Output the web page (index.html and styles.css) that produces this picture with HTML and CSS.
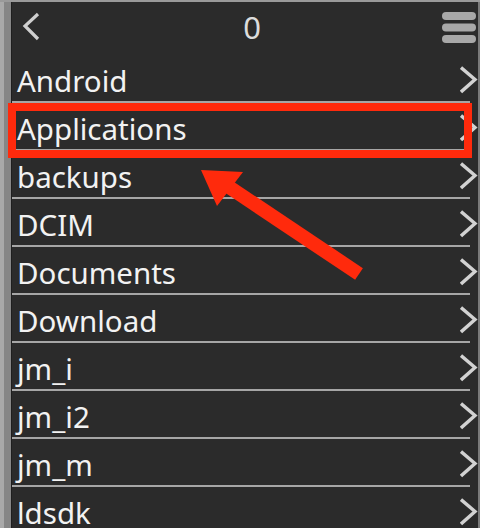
FILE: index.html
```html
<!DOCTYPE html>
<html>
    <head>
        <link rel="stylesheet" href="styles.css">
    </head>
    <body>
        <div class="screen">
            <div class="edge"></div>
            <div class="panel">
                <div class="header">
                    <svg class="back" width="20" height="32" viewBox="0 0 20 32">
                        <polyline points="16,3 3,15 16,28" fill="none" stroke="#cfcfcf" stroke-width="3.2"/>
                    </svg>
                    <span class="count">0</span>
                    <svg class="menu" width="34" height="32" viewBox="0 0 34 32">
                        <rect x="0" y="0" width="34" height="8" rx="4" fill="#a8a8a8"/>
                        <rect x="0" y="11.5" width="34" height="8" rx="4" fill="#a8a8a8"/>
                        <rect x="0" y="23" width="34" height="8" rx="4" fill="#a8a8a8"/>
                    </svg>
                </div>
                <ul class="list">
                    <li>Android</li>
                    <li>Applications</li>
                    <li>backups</li>
                    <li>DCIM</li>
                    <li>Documents</li>
                    <li>Download</li>
                    <li>jm_i</li>
                    <li>jm_i2</li>
                    <li>jm_m</li>
                    <li>ldsdk</li>
                </ul>
            </div>
        </div>

        <!-- segni rossi sopra lo screenshot -->
        <div class="mark"></div>
        <svg class="arrow" width="480" height="528" viewBox="0 0 480 528">
            <line x1="359" y1="274" x2="226" y2="185" stroke="#ff2a0c" stroke-width="14"/>
            <polygon points="201,170 243,172 217,206" fill="#ff2a0c"/>
        </svg>
    </body>
</html>
```

FILE: styles.css
```css
body {
    margin: 0;
    width: 480px;
    height: 528px;
    overflow: hidden;
    background-color: #2b2b2b;
    font-family: "Noto Sans", "Open Sans", sans-serif;
}
.screen {
    display: flex;
    height: 528px;
    border-top: 2px solid #9a9a9a;
    box-sizing: border-box;
}
.edge {
    width: 12px;
    flex-shrink: 0;
    background: linear-gradient(to right, #a9a9a9 0, #a9a9a9 4px, #868686 4px, #868686 11px, #1e1e1e 11px);
}
.panel {
    flex: 1;
    border-right: 2px solid #7a7a7a;
}
.header {
    display: grid;
    grid-template-columns: 1fr auto 1fr;
    align-items: center;
    height: 53px;
    padding: 0 2px 0 10px;
}
.back {
    margin-top: -4px;
}
.count {
    color: #dcdcdc;
    font-size: 31px;
    padding-left: 6px;
    margin-top: -3px;
}
.menu {
    justify-self: end;
    margin-top: -2px;
}
.list {
    list-style: none;
    margin: 0;
    padding: 0;
}
.list li {
    position: relative;
    height: 45px;
    padding-top: 3px;
    line-height: 46px;
    padding-left: 5px;
    color: #f2f2f2;
    font-size: 29.5px;
    background: linear-gradient(#a6a6a6, #a6a6a6) no-repeat left bottom / 458px 2px;
}
.list li::after {
    content: "";
    position: absolute;
    right: 0;
    top: 11px;
    width: 18px;
    height: 28px;
    background: url("data:image/svg+xml,%3Csvg xmlns='http://www.w3.org/2000/svg' width='18' height='28'%3E%3Cpolyline points='1,1.5 15,13.5 1,26' fill='none' stroke='%23d2d2d2' stroke-width='3.4'/%3E%3C/svg%3E") no-repeat;
}
.mark {
    position: absolute;
    left: 8px;
    top: 103px;
    width: 464px;
    height: 55px;
    border: 8px solid #ff2a0c;
    box-sizing: border-box;
}
.arrow {
    position: absolute;
    left: 0;
    top: 0;
}
```
